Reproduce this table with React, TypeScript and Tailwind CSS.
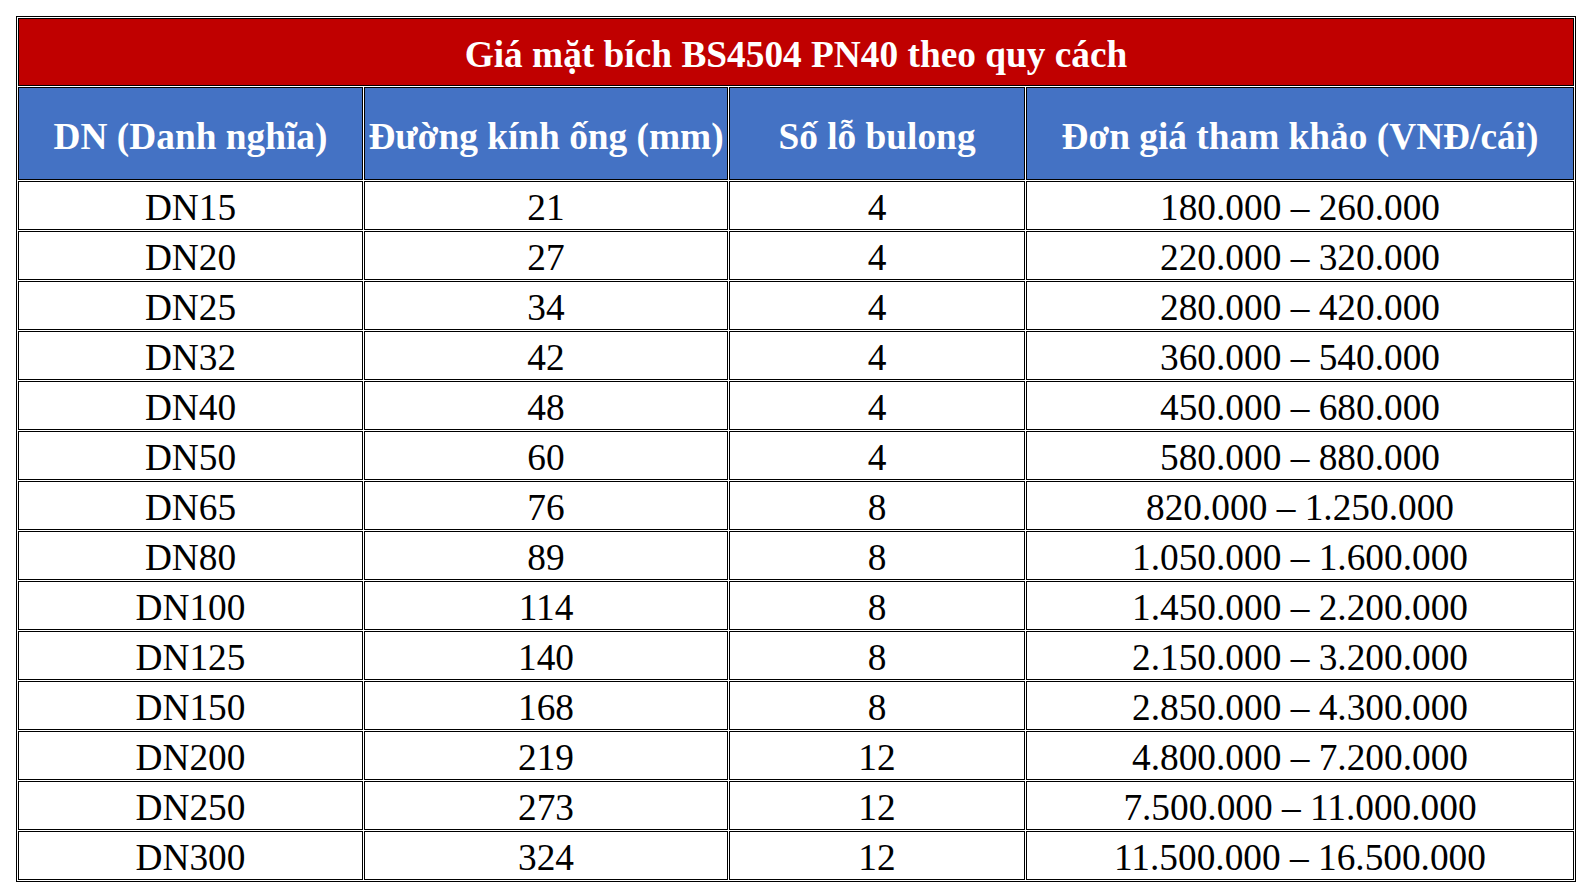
const rows: [string, string, string, string][] = [
  ["DN15", "21", "4", "180.000 – 260.000"],
  ["DN20", "27", "4", "220.000 – 320.000"],
  ["DN25", "34", "4", "280.000 – 420.000"],
  ["DN32", "42", "4", "360.000 – 540.000"],
  ["DN40", "48", "4", "450.000 – 680.000"],
  ["DN50", "60", "4", "580.000 – 880.000"],
  ["DN65", "76", "8", "820.000 – 1.250.000"],
  ["DN80", "89", "8", "1.050.000 – 1.600.000"],
  ["DN100", "114", "8", "1.450.000 – 2.200.000"],
  ["DN125", "140", "8", "2.150.000 – 3.200.000"],
  ["DN150", "168", "8", "2.850.000 – 4.300.000"],
  ["DN200", "219", "12", "4.800.000 – 7.200.000"],
  ["DN250", "273", "12", "7.500.000 – 11.000.000"],
  ["DN300", "324", "12", "11.500.000 – 16.500.000"],
];

const headers = ["DN (Danh nghĩa)", "Đường kính ống (mm)", "Số lỗ bulong", "Đơn giá tham khảo (VNĐ/cái)"];

export default function App() {
  return (
    <div className="min-h-screen bg-white p-4 font-['Liberation_Serif','Times_New_Roman',serif]">
      <table className="w-[1560px] table-fixed border-separate border-spacing-[1px] border border-black text-[37.33px] leading-[41px]">
        <colgroup>
          <col className="w-[345px]" />
          <col className="w-[364px]" />
          <col className="w-[296px]" />
          <col className="w-[548px]" />
        </colgroup>
        <thead>
          <tr className="h-[68px]">
            <th colSpan={4} className="border border-black bg-[#c00000] p-px pt-[5px] text-center align-middle font-bold whitespace-nowrap text-white">
              Giá mặt bích BS4504 PN40 theo quy cách
            </th>
          </tr>
          <tr className="h-[93px]">
            {headers.map((h) => (
              <th key={h} className="border border-black bg-[#4472c4] p-px pt-[7px] text-center align-middle font-bold whitespace-nowrap text-white">
                {h}
              </th>
            ))}
          </tr>
        </thead>
        <tbody>
          {rows.map((r) => (
            <tr key={r[0]} className="h-[49px]">
              {r.map((cell, i) => (
                <td key={i} className="border border-black p-px pt-[4px] text-center align-middle whitespace-nowrap text-black">
                  {cell}
                </td>
              ))}
            </tr>
          ))}
        </tbody>
      </table>
    </div>
  );
}
